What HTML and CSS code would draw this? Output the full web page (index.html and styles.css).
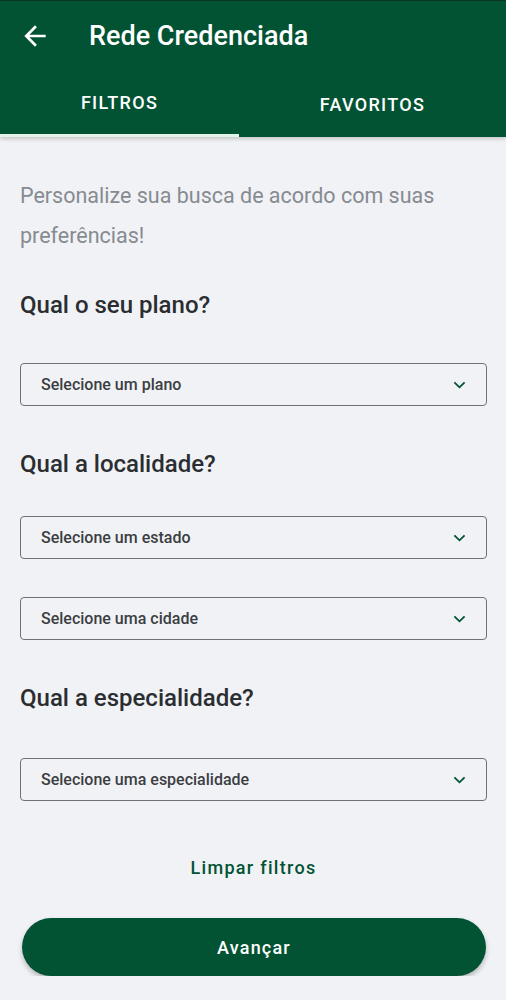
FILE: index.html
```html
<!DOCTYPE html>
<html lang="pt-BR">
<head>
    <meta charset="UTF-8">
    <meta name="viewport" content="width=device-width, initial-scale=1.0">
    <title>Rede Credenciada</title>
    <link rel="stylesheet" href="styles.css">
</head>
<body>

<header class="app-header">
    <div class="toolbar">
        <button class="back-btn" aria-label="Voltar">
            <svg viewBox="0 0 24 24" width="32" height="32">
                <path d="M20 11H7.83l5.59-5.59L12 4l-8 8 8 8 1.41-1.41L7.83 13H20v-2z" fill="#ffffff"/>
            </svg>
        </button>
        <h1 class="title">Rede Credenciada</h1>
    </div>
    <nav class="tabs">
        <div class="tab active">Filtros</div>
        <div class="tab">Favoritos</div>
    </nav>
</header>

<main class="content">
    <p class="intro">Personalize sua busca de acordo com suas preferências!</p>

    <h2 class="question q-plano">Qual o seu plano?</h2>
    <div class="select s-plano">
        <span>Selecione um plano</span>
        <svg class="chevron" viewBox="0 0 14 8" width="13" height="8"><path d="M1.5 1.2 7 6.5l5.5-5.3" /></svg>
    </div>

    <h2 class="question">Qual a localidade?</h2>
    <div class="select s-estado">
        <span>Selecione um estado</span>
        <svg class="chevron" viewBox="0 0 14 8" width="13" height="8"><path d="M1.5 1.2 7 6.5l5.5-5.3" /></svg>
    </div>
    <div class="select s-cidade">
        <span>Selecione uma cidade</span>
        <svg class="chevron" viewBox="0 0 14 8" width="13" height="8"><path d="M1.5 1.2 7 6.5l5.5-5.3" /></svg>
    </div>

    <h2 class="question">Qual a especialidade?</h2>
    <div class="select s-espec">
        <span>Selecione uma especialidade</span>
        <svg class="chevron" viewBox="0 0 14 8" width="13" height="8"><path d="M1.5 1.2 7 6.5l5.5-5.3" /></svg>
    </div>

    <a class="clear-link" href="#">Limpar filtros</a>

    <button class="next-btn">Avançar</button>
</main>

</body>
</html>
```

FILE: styles.css
```css
body {
    margin: 0;
    font-family: Roboto, "Noto Sans", Arial, sans-serif;
    background-color: #f1f2f5;
}

/* cabeçalho verde */
.app-header {
    background-color: #025334;
    border-top: 1px solid #0b3626;
    box-shadow: 0 2px 4px rgba(0, 0, 0, 0.18);
}
.toolbar {
    height: 69px;
    display: flex;
    align-items: center;
    padding-left: 19px;
}
.back-btn {
    width: 32px;
    height: 32px;
    padding: 0;
    border: none;
    background: none;
    display: flex;
}
.title {
    margin: 0 0 0 38px;
    color: #ffffff;
    font-size: 27px;
    font-weight: 500;
}
.tabs {
    display: grid;
    grid-template-columns: 239px 1fr;
    height: 67px;
}
.tab {
    display: flex;
    align-items: center;
    justify-content: center;
    color: #ffffff;
    font-size: 18px;
    font-weight: 500;
    letter-spacing: 1.3px;
    text-transform: uppercase;
    box-sizing: border-box;
    padding-top: 1px;
}
.tab.active {
    border-bottom: 3px solid #e3f2ea;
}

/* conteúdo */
.content {
    padding: 39px 19px 0 20px;
    display: flex;
    flex-direction: column;
}
.intro {
    margin: 0;
    color: #868b91;
    font-size: 21.5px;
    line-height: 40px;
}
.question {
    margin: 43px 0 0;
    color: #2a2d31;
    font-size: 24px;
    font-weight: 500;
    line-height: 30px;
}
.question.q-plano {
    margin-top: 34px;
}
.select {
    height: 43px;
    box-sizing: border-box;
    border: 1px solid #6e7176;
    border-radius: 4px;
    display: flex;
    align-items: center;
    justify-content: space-between;
    padding: 0 20px 0 20px;
    color: #3b3e42;
    font-size: 16px;
    font-weight: 500;
    margin-top: 37px;
}
.s-plano {
    margin-top: 43px;
}
.s-cidade {
    margin-top: 38px;
}
.s-espec {
    margin-top: 45px;
}
.chevron path {
    fill: none;
    stroke: #025334;
    stroke-width: 2;
}
.clear-link {
    margin-top: 55px;
    align-self: center;
    color: #025334;
    font-size: 18px;
    font-weight: 500;
    letter-spacing: 1.3px;
    line-height: 24px;
    text-decoration: none;
}
.next-btn {
    margin: 38px 1px 0 2px;
    height: 58px;
    border: none;
    border-radius: 29px;
    background-color: #025334;
    color: #ffffff;
    font-family: inherit;
    font-size: 18px;
    font-weight: 500;
    letter-spacing: 1.2px;
    box-shadow: 0 3px 5px rgba(0, 0, 0, 0.25);
    cursor: pointer;
}
```
